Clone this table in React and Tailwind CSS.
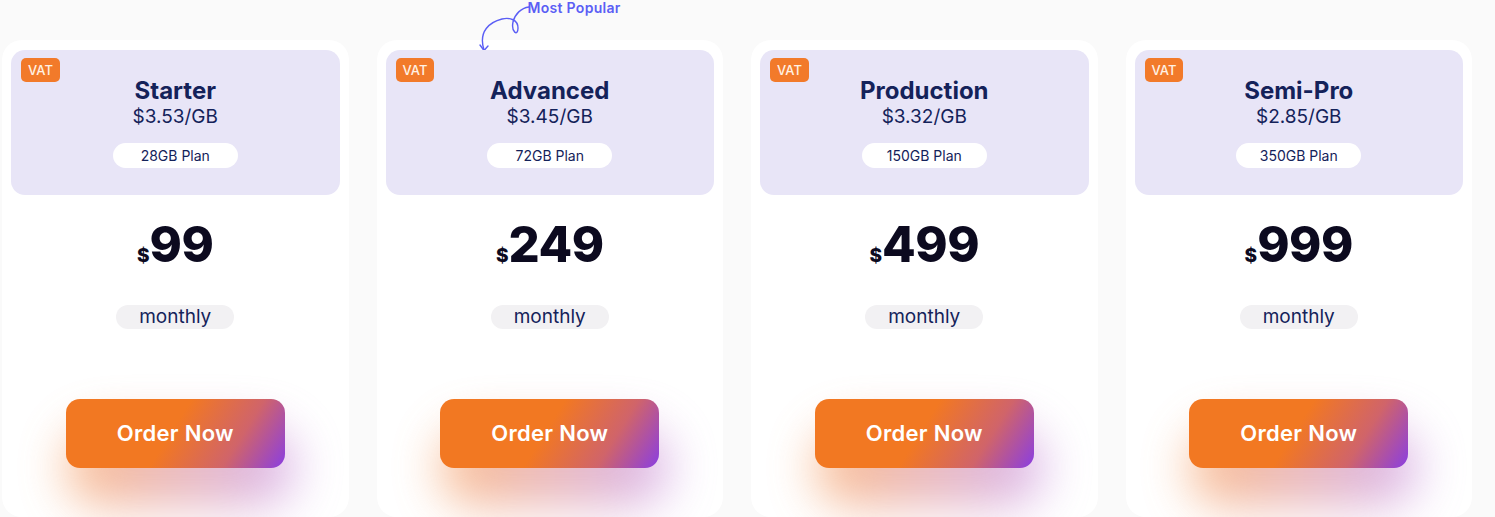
import React from "react";

const plans = [
  { name: "Starter", per: "$3.53/GB", gb: "28GB Plan", price: "99" },
  { name: "Advanced", per: "$3.45/GB", gb: "72GB Plan", price: "249", popular: true },
  { name: "Production", per: "$3.32/GB", gb: "150GB Plan", price: "499" },
  { name: "Semi-Pro", per: "$2.85/GB", gb: "350GB Plan", price: "999" },
];

function Card({ p }) {
  return (
    <div className="relative flex flex-col items-center rounded-[20px] bg-white px-[9px] pt-[10px] h-[477px]">
      {p.popular && (
        <div className="absolute left-[98px] top-[-40px] flex items-start">
          <svg width="56" height="54" viewBox="0 0 56 54" fill="none">
            <path
              d="M54 7 C46 8, 40 14, 38 22 C36 32, 43 37, 43 28 C43 20, 35 17, 27 19 C15 22, 3 31, 9 50"
              stroke="#5b5ef5"
              strokeWidth="1.4"
              strokeLinecap="round"
              fill="none"
            />
            <path d="M5 45 L9 50.5 L13 46" stroke="#5b5ef5" strokeWidth="1.4" strokeLinecap="round" strokeLinejoin="round" fill="none" />
          </svg>
          <span className="ml-[-3px] text-[14px] font-semibold leading-[16px] tracking-[0.3px] text-[#5b5ef5]">Most Popular</span>
        </div>
      )}
      <div className="relative flex w-full flex-col items-center rounded-[14px] bg-[#e8e5f7] h-[145px] pt-[26px]">
        <span className="absolute left-[10px] top-[8px] rounded-[5px] bg-[#f27a2a] px-[7px] py-[3px] text-[13px] leading-[18px] font-medium text-[#fff1e4]">
          VAT
        </span>
        <div className="text-[24px] font-bold leading-[30px] text-[#14225a]">{p.name}</div>
        <div className="text-[19px] leading-[22px] text-[#14225a]">{p.per}</div>
        <div className="mt-[15px] flex h-[25px] w-[125px] items-center justify-center rounded-full bg-white text-[14px] text-[#14225a]">
          {p.gb}
        </div>
      </div>
      <div className="mt-[22px] flex items-baseline text-[#0c0a1f]">
        <span className="text-[19px] font-extrabold">$</span>
        <span className="text-[49px] font-extrabold leading-[56px] tracking-[-0.5px]">{p.price}</span>
      </div>
      <div className="mt-[32px] flex h-[24px] w-[118px] items-center justify-center rounded-full bg-[#f2f1f3] text-[19px] text-[#14225a]">
        monthly
      </div>
      <div className="relative mt-[70px]">
        <div className="absolute left-[0px] right-[-10px] top-[28px] h-[80px] rounded-[40px] bg-[linear-gradient(90deg,#f9a05c,#c895e6)] opacity-70 blur-[24px]" />
        <button className="relative flex h-[69px] w-[219px] items-center justify-center rounded-[14px] bg-[linear-gradient(122deg,#f27822_0%,#f27822_48%,#d0646a_76%,#8a3ee2_100%)] text-[22px] font-semibold tracking-[0.3px] text-white">
          Order Now
        </button>
      </div>
    </div>
  );
}

export default function App() {
  return (
    <div className="h-[517px] w-[1495px] overflow-hidden bg-[#fafafa] font-['Inter',sans-serif]">
      <div className="grid w-[1470px] grid-cols-4 gap-x-[28px] pl-[2px] pt-[40px] box-content">
        {plans.map((p) => (
          <Card key={p.name} p={p} />
        ))}
      </div>
    </div>
  );
}
